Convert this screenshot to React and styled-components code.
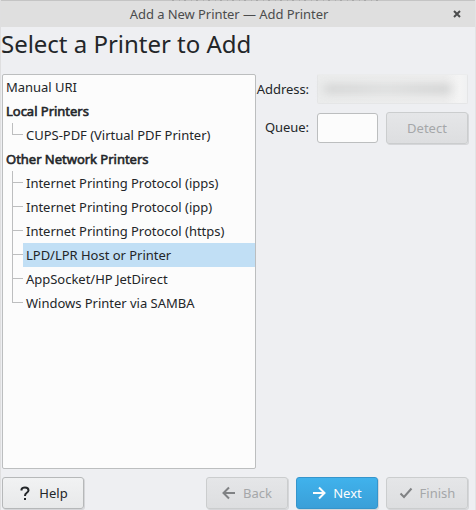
import React from 'react';
import styled, { createGlobalStyle, css } from 'styled-components';

const GlobalStyle = createGlobalStyle`
  * { box-sizing: border-box; }
  body { margin: 0; overflow: hidden; background: #eff0f1; }
`;

const Window = styled.div`
  width: 476px;
  height: 510px;
  display: flex;
  flex-direction: column;
  background: #eeeff2;
  border-left: 1px solid #dfdfe0;
  border-right: 1px solid #e3e4e5;
  color: #232629;
  font: 13px/24px "Noto Sans", sans-serif;
  letter-spacing: -0.02px;
  white-space: nowrap;
  overflow: hidden;
`;

const TopEdge = styled.div`
  flex: none;
  height: 1px;
  margin: 0 -1px;
  padding: 0 93px 0 172px;
  background: #c4c4c4;
  &::before {
    content: '';
    display: block;
    height: 1px;
    background: repeating-linear-gradient(90deg, #a8a8a8 0 2px, #c4c4c4 2px 7px, #b0b0b0 7px 8px, #c4c4c4 8px 12px);
  }
`;

const TitleBar = styled.header`
  height: 26px;
  flex: none;
  display: grid;
  grid-template-columns: 17px 1fr 32px;
  align-items: center;
  text-align: center;
  margin: 0 -1px;
  padding: 0 3px 0 0;
  background: #dfdfdf;
  color: #4b4c4d;
`;

const TitleText = styled.span`
  grid-column: 2;
  letter-spacing: -0.06px;
`;

const CloseButton = styled.button`
  display: flex;
  justify-content: center;
  padding: 0;
  border: 0;
  background: none;
  color: #4b4c4d;
`;

const Heading = styled.h1`
  height: 47px;
  margin: 0;
  flex: none;
  font-size: 24px;
  font-weight: 400;
  line-height: 33px;
`;

const Content = styled.main`
  display: flex;
  height: 395px;
  padding-left: 1px;
`;

const Tree = styled.ul`
  width: 254px;
  margin: 0;
  padding: 0;
  list-style: none;
  background: #fcfcfc;
  border: 1px solid #bcbebf;
  border-radius: 2px;
`;

const Row = styled.li`
  display: flex;
  height: 24px;
  padding-left: ${(p) => (p.$child ? 9 : 0)}px;
`;

const Label = styled.span`
  flex: 1;
  padding-left: 3px;
  background: ${(p) => (p.$selected ? '#c1dff5' : 'transparent')};
  ${(p) => p.$group && css`-webkit-text-stroke: 0.6px #232629;`}
`;

const Branch = styled.span`
  display: grid;
  grid-template-rows: 12px 12px;
  width: 11px;
  &::before {
    content: '';
    border-left: 1px solid #bdbebf;
    border-bottom: 1px solid #bdbebf;
  }
  &::after {
    content: '';
    border-left: 1px solid ${(p) => (p.$last ? 'transparent' : '#bdbebf')};
  }
`;

const Form = styled.form`
  flex: 1;
  display: grid;
  grid-template-columns: 53px 61px 83px;
  grid-template-rows: 30px 32px;
  column-gap: 8px;
  row-gap: 8px;
  align-content: start;
  align-items: center;
`;

const FieldLabel = styled.label`
  display: flex;
  justify-content: flex-end;
  letter-spacing: -0.06px;
  padding-bottom: ${(p) => p.$raise || 0}px;
`;

const AddressField = styled.div`
  grid-column: 2 / 4;
  display: flex;
  align-items: center;
  width: 151px;
  height: 30px;
  padding: 0 16px 0 6px;
  background: linear-gradient(90deg, #ebecec, #ededed 85%, #f4f4f4 95%, #f0f1f2);
  border: 1px solid #e5e6e7;
  border-top-color: #ebeced;
  border-radius: 2px;
`;

const Obscured = styled.span`
  width: 100%;
  height: 8px;
  background: linear-gradient(90deg, #cfd0d0, #d3d4d4 25%, #dadbdb 50%, #d2d3d3 72%, #cbcccc);
  filter: blur(5px);
`;

const QueueInput = styled.input`
  width: 61px;
  height: 30px;
  background: #fcfcfc;
  border: 1px solid #bcbebf;
  border-radius: 3px;
`;

const variants = {
  normal: css`
    color: #232629;
    background: linear-gradient(#f1f2f3, #e8e9ea);
    border-color: #b6b8b9;
  `,
  disabled: css`
    color: #a5a7a9;
    background: linear-gradient(#e5e6e8, #dddee0);
    border-color: #cbcdce;
  `,
  primary: css`
    color: #fcfcfc;
    background: linear-gradient(#40b2ec, #3a9fd8);
    border-color: #3595cc;
  `,
};

const Button = styled.button`
  display: flex;
  align-items: center;
  justify-content: center;
  gap: 7px;
  width: 82px;
  height: 32px;
  padding: 0;
  font: inherit;
  border: 1px solid;
  border-radius: 3px;
  box-shadow: 1px 1px 0 rgba(0, 0, 0, 0.1);
  ${(p) => variants[p.$variant || 'normal']}
`;

const Footer = styled.footer`
  display: flex;
  gap: 8px;
  padding: 8px 7px 0 1px;
`;

const Spacer = styled.span`
  flex: 1;
`;

const Icon = ({ d, color = 'currentColor' }) => (
  <svg width="14" height="14" viewBox="0 0 14 14" fill="none" stroke={color} strokeWidth="2">
    <path d={d} />
  </svg>
);

const items = [
  { text: 'Manual URI' },
  { text: 'Local Printers', group: true },
  { text: 'CUPS-PDF (Virtual PDF Printer)', child: true, last: true },
  { text: 'Other Network Printers', group: true },
  { text: 'Internet Printing Protocol (ipps)', child: true },
  { text: 'Internet Printing Protocol (ipp)', child: true },
  { text: 'Internet Printing Protocol (https)', child: true },
  { text: 'LPD/LPR Host or Printer', child: true, selected: true },
  { text: 'AppSocket/HP JetDirect', child: true },
  { text: 'Windows Printer via SAMBA', child: true, last: true },
];

export default function App() {
  return (
    <>
      <GlobalStyle />
      <Window>
        <TopEdge />
        <TitleBar>
          <TitleText>Add a New Printer — Add Printer</TitleText>
          <CloseButton aria-label="Close">
            <svg width="8" height="8" viewBox="0 0 8 8" stroke="currentColor" strokeWidth="2">
              <path d="M1 1l6 6M7 1l-6 6" />
            </svg>
          </CloseButton>
        </TitleBar>
        <Heading>Select a Printer to Add</Heading>
        <Content>
          <Tree>
            {items.map((item) => (
              <Row key={item.text} $child={item.child}>
                {item.child && <Branch $last={item.last} />}
                <Label $group={item.group} $selected={item.selected}>{item.text}</Label>
              </Row>
            ))}
          </Tree>
          <Form>
            <FieldLabel>Address:</FieldLabel>
            <AddressField><Obscured /></AddressField>
            <FieldLabel htmlFor="queue" $raise={2}>Queue:</FieldLabel>
            <QueueInput id="queue" />
            <Button type="button" disabled $variant="disabled">Detect</Button>
          </Form>
        </Content>
        <Footer>
          <Button>
            <Icon d="M3.500 4.500V3.500Q4 1.500 7 1.500Q10.500 1.500 10.500 4.500Q10.500 5.500 8.500 7Q7 8 7 10M7 12v2" />
            Help
          </Button>
          <Spacer />
          <Button disabled $variant="disabled">
            <Icon color="#808284" d="M13 7H2M7 1.500L1.500 7L7 12.500" />
            Back
          </Button>
          <Button $variant="primary">
            <Icon d="M1 7H12M7 1.500L12.500 7L7 12.500" />
            Next
          </Button>
          <Button disabled $variant="disabled">
            <Icon color="#808284" d="M1.500 7.500L5 11L12.500 2.500" />
            Finish
          </Button>
        </Footer>
      </Window>
    </>
  );
}
